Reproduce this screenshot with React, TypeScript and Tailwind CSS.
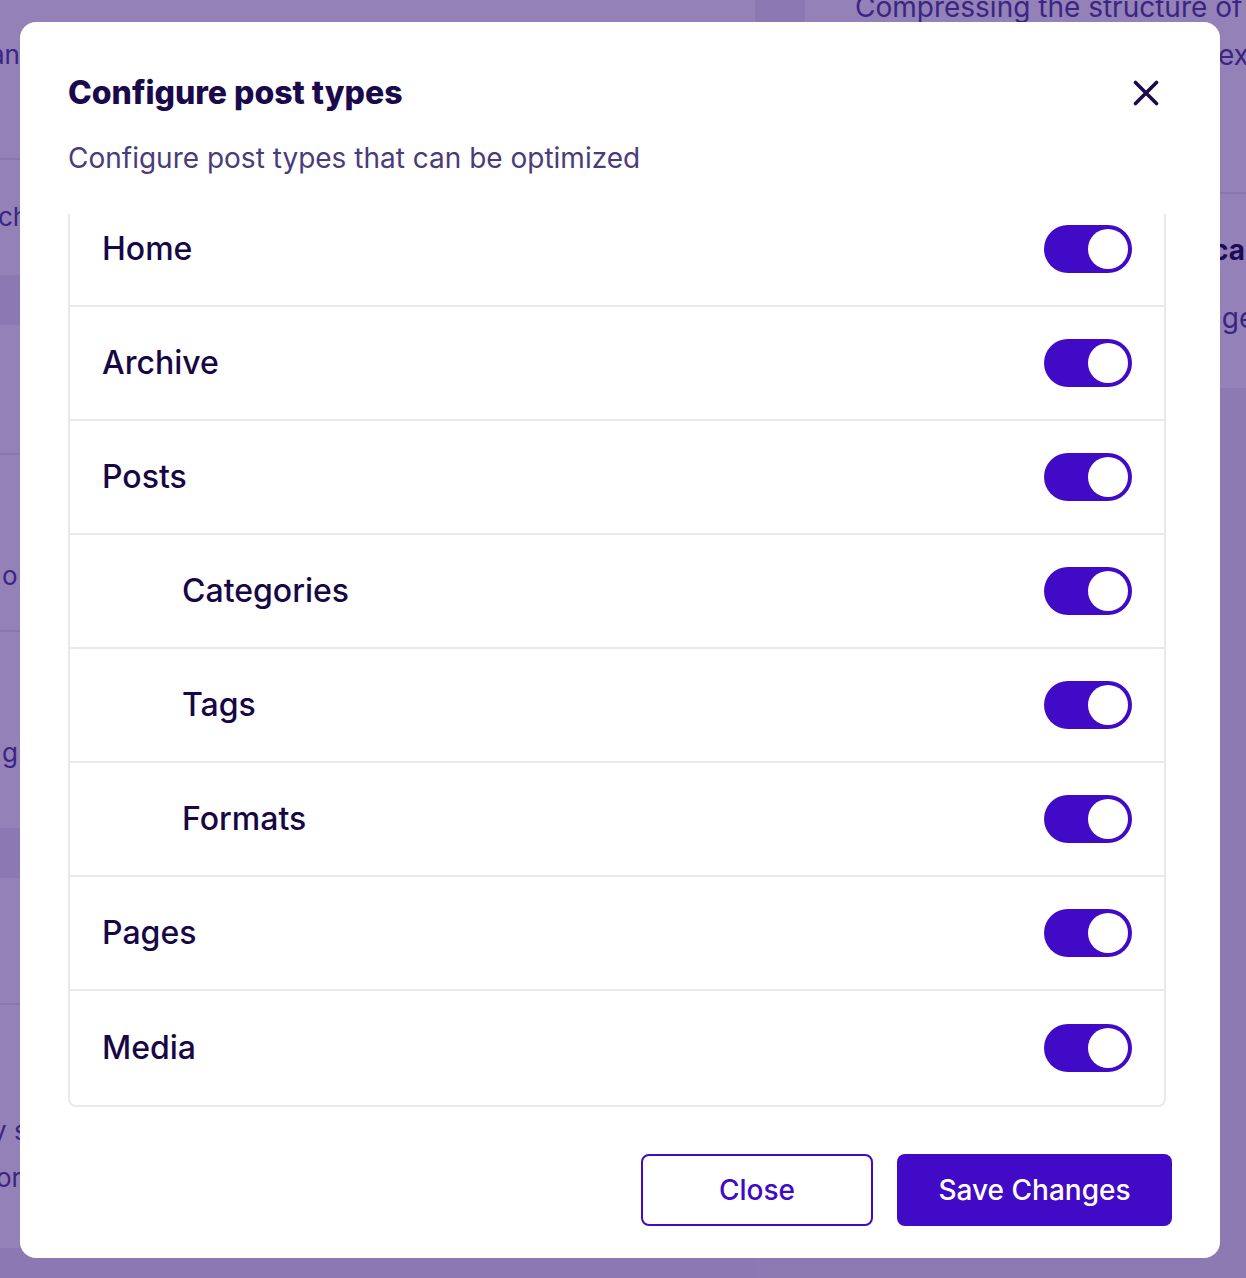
import React from "react";

type Row = { label: string; child?: boolean };

const rows: Row[] = [
  { label: "Home" },
  { label: "Archive" },
  { label: "Posts" },
  { label: "Categories", child: true },
  { label: "Tags", child: true },
  { label: "Formats", child: true },
  { label: "Pages" },
  { label: "Media" },
];

function Toggle() {
  return (
    <span className="relative inline-block h-[48px] w-[88px] shrink-0 rounded-full bg-[#410ac6]">
      <span className="absolute right-[4px] top-[4px] h-[40px] w-[40px] rounded-full bg-white" />
    </span>
  );
}

function Backdrop() {
  return (
    <div className="flex h-full w-full text-[26px] leading-[32px] text-[#3a2682]">
      {/* left column of the page behind */}
      <div className="flex w-[755px] shrink-0 flex-col">
        <div className="flex h-[160px] items-start border-b-2 border-[#8a77b0] pt-[39px]">
          <span className="-ml-[10px]">an</span>
        </div>
        <div className="flex h-[115px] items-center pb-[2px]">
          <span className="-ml-[2px]">ch</span>
        </div>
        <div className="h-[50px] bg-[#8c79b3]" />
        <div className="h-[130px] border-b-2 border-[#8a77b0]" />
        <div className="flex h-[177px] items-end border-b-2 border-[#8a77b0] pb-[38px]">
          <span className="ml-[2px]">o</span>
        </div>
        <div className="flex h-[196px] items-start pt-[105px]">
          <span className="ml-[2px]">g</span>
        </div>
        <div className="h-[50px] bg-[#8c79b3]" />
        <div className="h-[127px] border-b-2 border-[#8a77b0]" />
        <div className="flex h-[243px] flex-col pt-[102px] leading-[47px]">
          <span className="-ml-[8px]">y s</span>
          <span className="-ml-[4px]">or</span>
        </div>
        <div className="flex-1 bg-[#8c79b3]" />
      </div>
      {/* right column of the page behind */}
      <div className="flex min-w-0 flex-1 flex-col">
        <div className="flex h-[22px] items-end">
          <div className="h-[22px] w-[50px] shrink-0 bg-[#8c79b3]" />
          <span className="-mb-[1px] ml-[50px] whitespace-nowrap text-[28px]">
            Compressing the structure of
          </span>
        </div>
        <div className="flex h-[172px] items-start border-b-2 border-[#8a77b0] pt-[17px] pl-[454px]">
          <span className="whitespace-nowrap text-[28px]">text</span>
        </div>
        <div className="flex h-[194px] flex-col pt-[22px] leading-[68px]">
          <span className="ml-[457px] whitespace-nowrap text-[28px] font-bold text-[#1d0b55]">cache</span>
          <span className="ml-[451px] whitespace-nowrap text-[28px]">ages</span>
        </div>
        <div className="flex-1 bg-[#8d7ab2]" />
      </div>
    </div>
  );
}

export default function App() {
  return (
    <div className="relative h-[1278px] w-[1246px] overflow-hidden bg-[#9381b8] font-['Inter',sans-serif]">
      <Backdrop />

      <div className="absolute inset-0 pl-[20px] pt-[22px]">
        <div className="flex h-[1236px] w-[1200px] flex-col rounded-[16px] bg-white px-[48px] pt-[52px] pb-[32px]">
          <div className="flex items-center justify-between">
            <h2 className="text-[32px] font-extrabold leading-[38px] text-[#1a0a4c]">
              Configure post types
            </h2>
            <button className="mr-[13px] flex h-[26px] w-[26px] items-center justify-center text-[#1a0a4c]">
              <svg width="26" height="26" viewBox="0 0 26 26" fill="none">
                <path
                  d="M2.5 2.5 L23.5 23.5 M23.5 2.5 L2.5 23.5"
                  stroke="currentColor"
                  strokeWidth="3.6"
                  strokeLinecap="round"
                />
              </svg>
            </button>
          </div>
          <p className="mt-[28px] text-[28px] leading-[36px] text-[#4a3b7a]">
            Configure post types that can be optimized
          </p>

          <div className="mt-[38px] h-[893px] w-[1098px] overflow-hidden rounded-b-[8px] border-x-2 border-b-2 border-[#e9e7f0]">
            <div className="-mt-[21px]">
              {rows.map((r, i) => (
                <div
                  key={r.label}
                  className={`flex h-[114px] items-center justify-between pr-[32px] ${
                    r.child ? "pl-[112px]" : "pl-[32px]"
                  } ${i < rows.length - 1 ? "border-b-2 border-[#e9e7f0]" : ""}`}
                >
                  <span className="text-[32px] font-medium leading-[38px] text-[#170845]">
                    {r.label}
                  </span>
                  <Toggle />
                </div>
              ))}
            </div>
          </div>

          <div className="mt-[47px] flex justify-end gap-[24px]">
            <button className="h-[72px] w-[232px] rounded-[8px] border-2 border-[#410ac6] text-[28px] font-medium text-[#410ac6]">
              Close
            </button>
            <button className="h-[72px] w-[275px] rounded-[8px] bg-[#410ac6] text-[28px] font-medium text-white">
              Save Changes
            </button>
          </div>
        </div>
      </div>
    </div>
  );
}
